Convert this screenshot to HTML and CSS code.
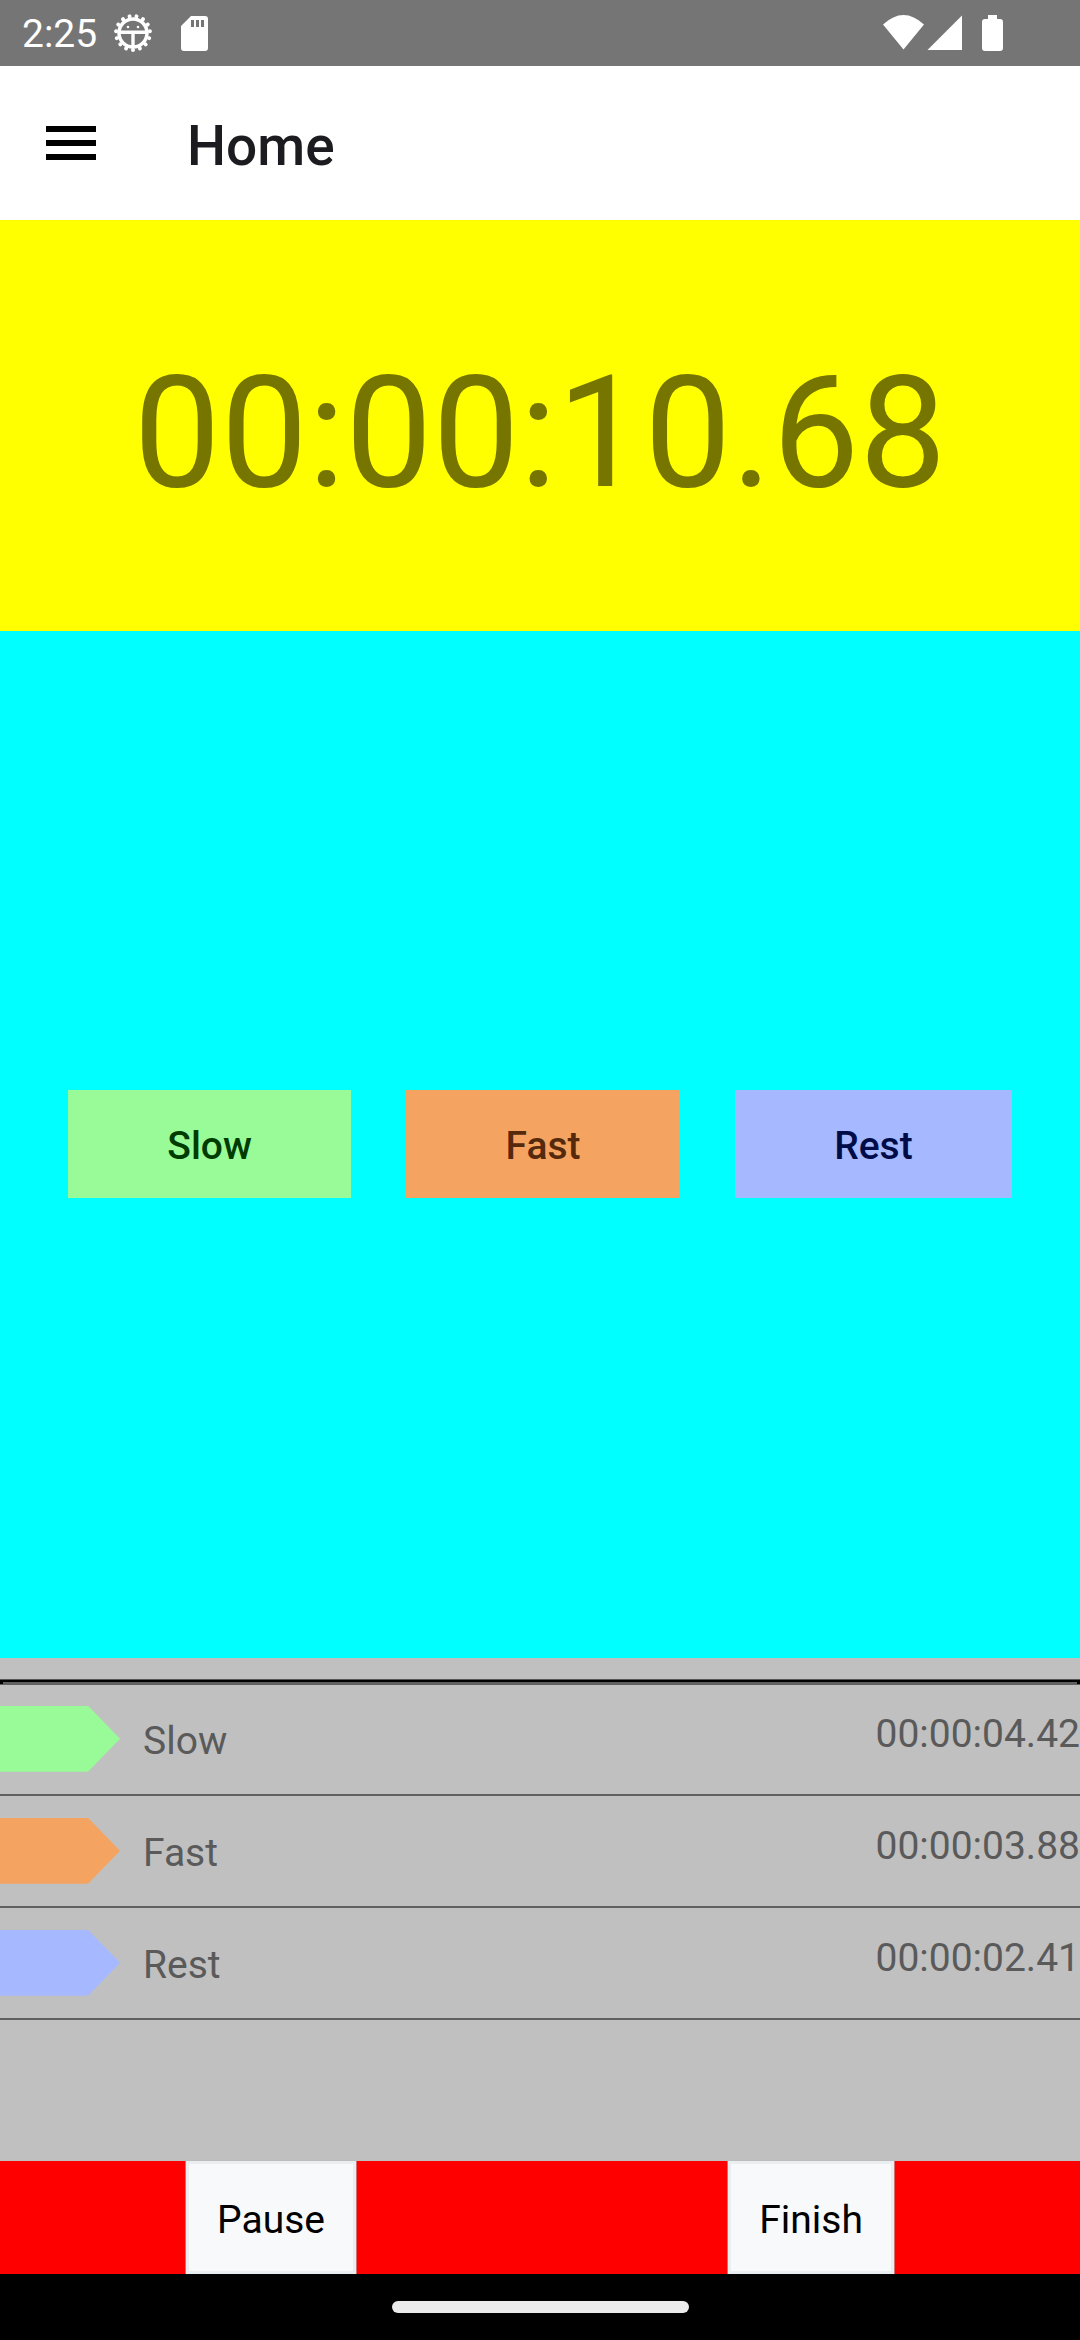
FILE: index.html
```html
<!DOCTYPE html>
<html lang="en">
<head>
<meta charset="utf-8">
<meta name="viewport" content="width=device-width, initial-scale=1">
<title>Home</title>
<link rel="stylesheet" href="styles.css">
</head>
<body>
<div class="status">
  <span class="clock">2:25</span>
  <svg class="gear" width="40" height="40" viewBox="0 0 40 40" aria-hidden="true">
    <circle cx="20" cy="20" r="14" fill="none" stroke="#fff" stroke-width="3.500"/>
    <circle cx="20" cy="20" r="17" fill="none" stroke="#fff" stroke-width="4" stroke-linecap="round" pathLength="150" stroke-dasharray="0.01 9.99" stroke-dashoffset="-7.5"/>
    <path d="M7 17.500h26v3.500H21.700V33h-3.400V21H7z" fill="#fff"/>
    <circle cx="15" cy="14" r="1.300" fill="#fff"/>
    <circle cx="25" cy="14" r="1.300" fill="#fff"/>
  </svg>
  <svg class="card" width="27" height="35" viewBox="0 0 27 35" aria-hidden="true">
    <path fill="#fff" fill-rule="evenodd" d="M10 0H24Q27 0 27 3V32Q27 35 24 35H3Q0 35 0 32V10ZM10 4V11H13V4ZM15 4V11H18V4ZM20 4V11H23V4Z"/>
  </svg>
  <svg class="signals" width="121" height="36" viewBox="0 0 121 36" aria-hidden="true">
    <path fill="#fff" d="M0 9.500Q20.500-9.500 41 9.500L20.500 34.500ZM79 .5V35H44.500ZM105 0h9v4h3q3 0 3 3v26q0 3-3 3h-15q-3 0-3-3V7q0-3 3-3h3z"/>
  </svg>
</div>
<header class="toolbar">
  <button class="menu" type="button" aria-label="Menu">
    <svg width="50" height="34" viewBox="0 0 50 34"><path d="M0 0h50v6H0zM0 14h50v6H0zM0 28h50v6H0z"/></svg>
  </button>
  <h1 class="title">Home</h1>
</header>
<main class="content">
  <section class="timer">00:00:10.68</section>
  <section class="phases">
    <button class="phase slow" type="button">Slow</button>
    <button class="phase fast" type="button">Fast</button>
    <button class="phase rest" type="button">Rest</button>
  </section>
  <section class="lower">
    <div class="history">
      <hr class="rule">
      <ul class="laps">
        <li class="lap"><span class="arrow slow"></span><span class="name">Slow</span><span class="time">00:00:04.42</span></li>
        <li class="lap"><span class="arrow fast"></span><span class="name">Fast</span><span class="time">00:00:03.88</span></li>
        <li class="lap"><span class="arrow rest"></span><span class="name">Rest</span><span class="time">00:00:02.41</span></li>
      </ul>
    </div>
    <div class="actions">
      <button class="action" type="button">Pause</button>
      <button class="action" type="button">Finish</button>
    </div>
  </section>
</main>
<footer class="nav"><span class="pill"></span></footer>
</body>
</html>
```
FILE: styles.css
```css
* { box-sizing: border-box; }

body {
  margin: 0;
  min-height: 100vh;
  display: flex;
  flex-direction: column;
  font-family: Roboto, "Noto Sans", sans-serif;
  font-size: 39px;
  line-height: 46px;
  background: #fff;
}

button {
  font: inherit;
  border: 0;
  border-radius: 0;
}

.status {
  height: 66px;
  padding: 0 76px 0 22px;
  display: flex;
  align-items: center;
  background: #757575;
  color: #fff;
}

.clock { padding-top: 2px; }
.gear { margin-left: 16px; }
.card { margin-left: 28px; }
.signals { margin-left: auto; }

.toolbar {
  height: 154px;
  padding: 0 46px;
  display: flex;
  align-items: center;
  gap: 91px;
}

.menu {
  padding: 0;
  display: flex;
  background: none;
}

.title {
  margin: 0;
  padding-top: 6px;
  font-size: 55px;
  font-weight: 500;
  line-height: 64px;
  color: #1c1b1f;
}

.content {
  flex: 1;
  display: grid;
  grid-template-rows: 2fr 5fr 3fr;
}

.timer {
  padding-top: 16px;
  display: flex;
  align-items: center;
  justify-content: center;
  background: #ff0;
  color: #757500;
  font-size: 155px;
  line-height: 180px;
}

.phases {
  padding: 0 68px;
  display: flex;
  align-items: center;
  gap: 55px;
  background: #0ff;
}

.phase {
  flex: auto;
  height: 108px;
  padding: 4px 0 0;
  font-weight: 500;
}

.slow { background: #98fb98; color: #003c00; }
.fast { background: #f4a460; color: #54290c; }
.rest { background: #a6b8ff; color: #000c48; }

.lower {
  display: flex;
  flex-direction: column;
}

.history {
  flex: 1;
  padding-top: 22px;
  background: #c0c0c0;
  color: #5a5a5a;
}

.rule {
  height: 4px;
  margin: 0;
  border: solid #000;
  border-width: 2px 3px 0;
  background: #606060;
  box-shadow: 0 -1px #555, 0 1px #606060;
}

.laps {
  margin: 0;
  padding: 0;
  list-style: none;
}

.lap {
  height: 112px;
  display: flex;
  align-items: center;
  border-bottom: 2px solid #606060;
}

.arrow {
  width: 120px;
  height: 66px;
  clip-path: polygon(0 0, 88px 0, 100% 50%, 88px 100%, 0 100%);
}

.name {
  margin-left: 23px;
  padding-top: 5px;
}

.time {
  margin-left: auto;
  padding-bottom: 9px;
}

.actions {
  height: 113px;
  display: flex;
  justify-content: space-around;
  background: #f00;
}

.action {
  padding: 4px 28px 0;
  border: 3px solid #ebeef0;
  background: #f8f9fb;
  color: #000;
  box-shadow: 0 0 0 1px #bbb9;
}

.nav {
  height: 66px;
  display: flex;
  align-items: center;
  justify-content: center;
  background: #000;
}

.pill {
  width: 297px;
  height: 12px;
  border-radius: 6px;
  background: #ebebeb;
}
```
